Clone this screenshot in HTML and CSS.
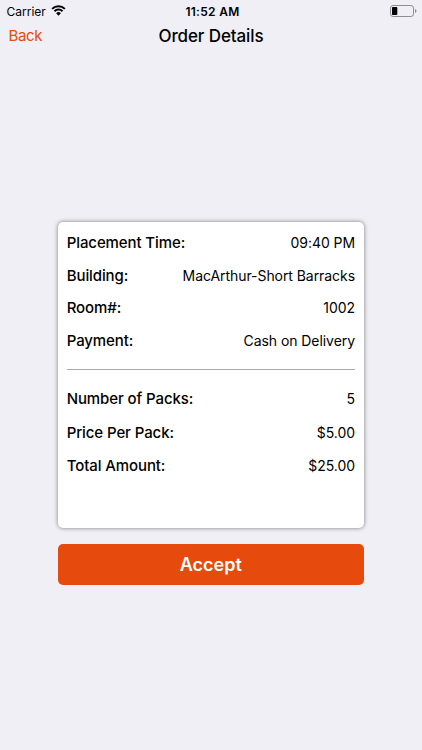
FILE: index.html
```html
<!DOCTYPE html>
<html lang="en">
<head>
<meta charset="utf-8">
<title>Order Details</title>
<link rel="stylesheet" href="styles.css">
</head>
<body>
<div class="status">
  <div class="carrier"><span class="carrier-name">Carrier</span>
    <svg class="wifi" viewBox="0 0 16 12"><path d="M1.2 4.8a9.6 9.6 0 0 1 13.6 0M3.7 7.3a6.1 6.1 0 0 1 8.6 0" fill="none" stroke="#000" stroke-width="2.1"/><path d="M8 12 5.5 9.4a3.5 3.5 0 0 1 5 0z"/></svg>
  </div>
  <span class="clock">11:52 AM</span>
  <svg class="battery" viewBox="0 0 27 12"><rect x=".5" y=".5" width="23" height="11" rx="2.6" fill="none" stroke="#8e8e92"/><rect x="2" y="2" width="5.3" height="8" rx=".8"/><path d="M25 4q1.5.5 1.5 2T25 8z" fill="#8e8e92"/></svg>
</div>
<header class="nav"><a class="back">Back</a><h1 class="title">Order Details</h1></header>
<main class="main">
  <section class="card">
    <dl class="rows">
      <div class="row"><dt class="label">Placement Time:</dt><dd class="value">09:40 PM</dd></div>
      <div class="row"><dt class="label">Building:</dt><dd class="value">MacArthur-Short Barracks</dd></div>
      <div class="row"><dt class="label">Room#:</dt><dd class="value">1002</dd></div>
      <div class="row"><dt class="label">Payment:</dt><dd class="value">Cash on Delivery</dd></div>
    </dl>
    <dl class="rows totals">
      <div class="row"><dt class="label">Number of Packs:</dt><dd class="value">5</dd></div>
      <div class="row"><dt class="label">Price Per Pack:</dt><dd class="value">$5.00</dd></div>
      <div class="row"><dt class="label">Total Amount:</dt><dd class="value">$25.00</dd></div>
    </dl>
  </section>
  <button class="accept">Accept</button>
</main>
</body>
</html>
```
FILE: styles.css
```css
* { box-sizing: border-box; }
body { margin: 0; height: 750px; background: #efeff5; color: #000; font-family: Inter, sans-serif; overflow: hidden; }
.status { height: 22px; display: grid; grid-template-columns: 1fr auto 1fr; align-items: center; padding: 0 5px 0 7px; }
.carrier { display: flex; align-items: center; gap: 5px; font-size: 12px; margin-left: -.5px; }
.wifi { width: 15px; height: 12px; margin-top: -2px; }
.clock { font-size: 12px; font-weight: 600; letter-spacing: .3px; margin-left: 1px; }
.battery { width: 27px; height: 12px; justify-self: end; margin-top: -1px; }
.nav { height: 28px; display: grid; grid-template-columns: 1fr auto 1fr; align-items: center; padding: 0 9px; }
.back { color: #e64a0c; font-size: 15px; letter-spacing: -.35px; margin: -1px 0 0 -.5px; }
.title { margin: 0; font-size: 17px; font-weight: 500; letter-spacing: -.1px; }
.main { width: 306px; margin: 172px auto 0; }
.card { height: 306px; padding: 4.3px 9px; background: #fff; border-radius: 5px; box-shadow: 0 0 4px rgba(0,0,0,.5); }
.rows { margin: 0; }
.row { height: 32.6px; display: flex; justify-content: space-between; align-items: center; white-space: nowrap; }
.label { font-size: 15px; font-weight: 500; letter-spacing: -.1px; margin-left: -.3px; }
.value { margin: 0; font-size: 14px; letter-spacing: -.06px; }
.totals { margin-top: 12.3px; border-top: 1px solid #a9a9a9; padding-top: 12.4px; }
.totals .row { height: 33.2px; }
.accept { display: block; width: 305.5px; height: 40.5px; margin-top: 16px; padding: 0; border: 0; border-radius: 5px; background: #e64a0c; color: #fff; font: 600 18px Inter, sans-serif; }
```
